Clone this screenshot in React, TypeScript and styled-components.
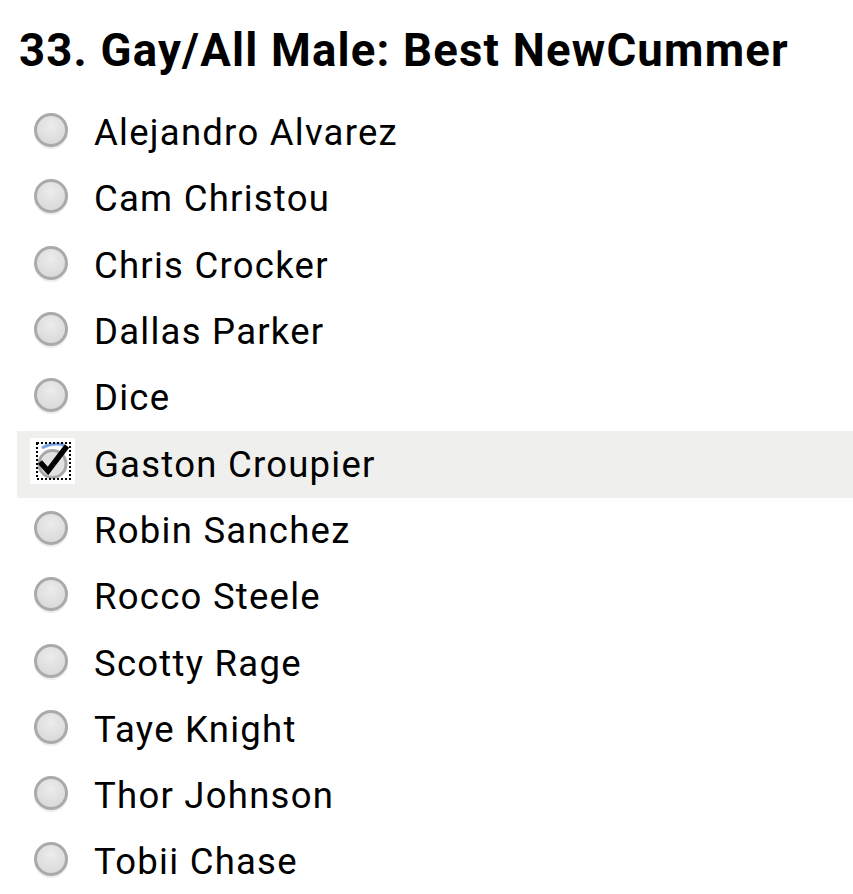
import React from "react";
import styled, { createGlobalStyle } from "styled-components";

const Global = createGlobalStyle`
  html, body { margin: 0; padding: 0; background: #ffffff; }
  body { font-family: Roboto, "Noto Sans", sans-serif; color: #000; }
`;

const Page = styled.div`
  width: 853px;
  height: 894px;
  overflow: hidden;
  box-sizing: border-box;
  padding-top: 24px;
`;

const Title = styled.h1`
  margin: 0 0 0 19px;
  font-family: Roboto, sans-serif;
  font-weight: 700;
  font-size: 45.5px;
  line-height: 54px;
  letter-spacing: 1.2px;
  white-space: nowrap;
`;

const List = styled.div`
  margin-top: 22px;
  margin-left: 17px;
  display: flex;
  flex-direction: column;
`;

const Row = styled.label<{ $selected?: boolean }>`
  display: flex;
  align-items: center;
  height: 66.3px;
  padding-left: 17px;
  background: ${(p) => (p.$selected ? "#efefed" : "transparent")};
  box-sizing: border-box;
`;

const Radio = styled.span`
  width: 34px;
  height: 34px;
  flex: none;
  box-sizing: border-box;
  border-radius: 50%;
  border: 3px solid #aaaaaa;
  background: radial-gradient(circle at 50% 35%, #ececec 0%, #dcdcdc 70%, #d2d2d2 100%);
  box-shadow: 0 2px 1px rgba(0, 0, 0, 0.08);
  margin-top: -6px;
`;

const CheckWrap = styled.span`
  width: 45px;
  height: 46px;
  flex: none;
  margin-left: -4px;
  margin-right: -7px;
  margin-top: -8px;
  background: #ffffff;
  display: block;
`;

const Name = styled.span`
  margin-left: 26px;
  font-size: 36.5px;
  line-height: 44px;
  font-weight: 400;
  letter-spacing: 1.25px;
  white-space: nowrap;
`;

const CheckIcon = () => (
  <svg width="45" height="46" viewBox="0 0 45 46" style={{ display: "block" }}>
    <circle cx="22.5" cy="26" r="13.5" fill="#e2e2e2" stroke="#a8a8a8" strokeWidth="3" />
    <path d="M12 10 Q22 4 34 7" stroke="#7aa2e6" strokeWidth="3" fill="none" />
    <path d="M10 24 L18 33 L37 8" stroke="#000" strokeWidth="5.5" fill="none" strokeLinejoin="miter" />
    <rect x="7" y="5" width="33" height="36" fill="none" stroke="#000" strokeWidth="2" strokeDasharray="2 2" />
  </svg>
);

const names = [
  "Alejandro Alvarez",
  "Cam Christou",
  "Chris Crocker",
  "Dallas Parker",
  "Dice",
  "Gaston Croupier",
  "Robin Sanchez",
  "Rocco Steele",
  "Scotty Rage",
  "Taye Knight",
  "Thor Johnson",
  "Tobii Chase",
];

export default function App() {
  return (
    <Page>
      <Global />
      <Title>33. Gay/All Male: Best NewCummer</Title>
      <List>
        {names.map((n) => {
          const sel = n === "Gaston Croupier";
          return (
            <Row key={n} $selected={sel}>
              {sel ? (
                <CheckWrap>
                  <CheckIcon />
                </CheckWrap>
              ) : (
                <Radio />
              )}
              <Name>{n}</Name>
            </Row>
          );
        })}
      </List>
    </Page>
  );
}
